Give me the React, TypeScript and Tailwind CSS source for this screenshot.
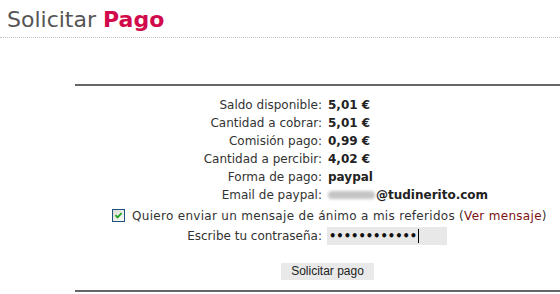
import React from "react";

const rows: [string, string][] = [
  ["Saldo disponible:", "5,01 €"],
  ["Cantidad a cobrar:", "5,01 €"],
  ["Comisión pago:", "0,99 €"],
  ["Cantidad a percibir:", "4,02 €"],
  ["Forma de pago:", "paypal"],
];

export default function App() {
  return (
    <div className="w-[560px] h-[294px] bg-white overflow-hidden" style={{ fontFamily: '"DejaVu Sans", Verdana, sans-serif' }}>
      <div className="pt-[7px] pl-[7px] h-[38px] text-[22px] leading-[26px] border-b border-dotted border-[#c4c4c4]">
        <span className="text-[#555555]">Solicitar </span>
        <span className="text-[#d10a4b] font-bold">Pago</span>
      </div>
      <div className="ml-[75px] mt-[46px] border-t-2 border-[#666666] pt-[10px] text-[12px] leading-[18px]">
        <div className="grid grid-cols-[247px_1fr] gap-x-[6px]">
          {rows.map(([l, v]) => (
            <React.Fragment key={l}>
              <div className="text-right text-[#333333]">{l}</div>
              <div className="font-bold text-[#222222]">{v}</div>
            </React.Fragment>
          ))}
          <div className="text-right text-[#333333]">Email de paypal:</div>
          <div className="font-bold text-[#222222] flex items-center">
            <span className="inline-block w-[47px] h-[8px] rounded-full bg-[#c4c4c4] blur-[1.5px] mr-[1px]" />
            <span>@tudinerito.com</span>
          </div>
        </div>
        <div className="h-[21px] mt-[1px] flex items-center pl-[37px] text-[#333333]">
          <div className="w-[13px] h-[13px] border border-[#1c5180] bg-gradient-to-br from-[#dcdcd5] to-[#fbfbf9] flex items-center justify-center mr-[7px]">
            <svg width="9" height="9" viewBox="0 0 9 9">
              <path d="M1.5 4.2 L3.6 6.4 L7.6 2" stroke="#21a121" strokeWidth="1.8" fill="none" />
            </svg>
          </div>
          <span className="tracking-[0.3px]">
            Quiero enviar un mensaje de ánimo a mis referidos (
            <span className="text-[#7a1212]">Ver mensaje</span>)
          </span>
        </div>
        <div className="grid grid-cols-[247px_1fr] gap-x-[6px] h-[20px] items-center">
          <div className="text-right text-[#333333]">Escribe tu contraseña:</div>
          <div className="w-[120px] h-[18px] bg-[#e8e8e8] flex items-center pl-[2px] ml-[-1px]">
            <span className="text-[#111111] text-[11.5px] font-bold leading-[18px]">••••••••••••</span>
            <span className="inline-block w-[1px] h-[14px] bg-black ml-[1px]" />
          </div>
        </div>
        <div className="flex justify-center mt-[17px]">
          <div
            className="ml-[20px] w-[93px] h-[17px] bg-[#e9e9e9] text-[12px] leading-[17px] text-center text-[#222222]"
            style={{ fontFamily: '"Liberation Sans", Arial, sans-serif' }}
          >
            Solicitar pago
          </div>
        </div>
        <div className="mt-[10px] border-t-2 border-[#666666]" />
      </div>
    </div>
  );
}
